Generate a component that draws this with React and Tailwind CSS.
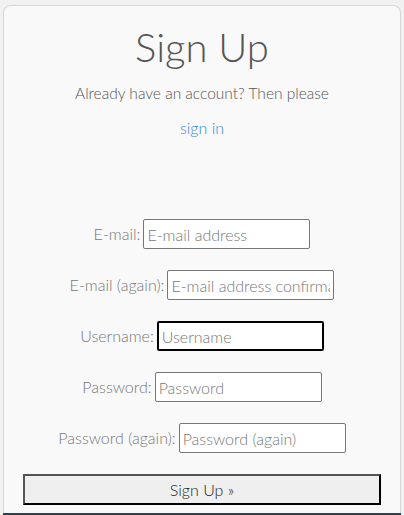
export default function App() {
  const rows = [
    { label: "E-mail:", placeholder: "E-mail address" },
    { label: "E-mail (again):", placeholder: "E-mail address confirmation" },
    { label: "Username:", placeholder: "Username", focused: true },
    { label: "Password:", placeholder: "Password" },
    { label: "Password (again):", placeholder: "Password (again)" },
  ];

  return (
    <div className="h-[515px] overflow-hidden bg-[#f1f1f1] pt-[5px] px-[3px] font-['Lato_Light','Lato','Liberation_Sans',sans-serif] flex flex-col">
      <div className="flex-1 rounded-t-lg border border-b-0 border-[#d6d6d6] bg-[#f9f9f9] flex flex-col items-center text-[#555] font-light">
        <h1 className="mt-[17px] text-[40px] leading-[48px] font-light text-[#555]">Sign Up</h1>
        <p className="mt-[13px] text-[15.5px] leading-[19px]">Already have an account? Then please</p>
        <a href="#" className="mt-[15px] text-[16px] leading-[19px] text-[#2f86f0]">sign in</a>

        <form className="mt-[82px] w-full flex flex-col gap-[21px]">
          {rows.map((r) => (
            <div key={r.label} className="flex items-center justify-center gap-[3px]">
              <label className="text-[16px] text-[#777]">{r.label}</label>
              <input
                type="text"
                placeholder={r.placeholder}
                className={`w-[167px] h-[30px] bg-white px-[3px] text-[16px] placeholder:text-[#777] outline-none rounded-[2px] ${
                  r.focused ? "border-2 border-black" : "border border-[#767676]"
                }`}
              />
            </div>
          ))}
          <div className="px-[19px]">
            <button
              type="button"
              className="w-full h-[31px] bg-[#efefef] border-2 border-t-[#555] border-l-[#555] border-b-black border-r-black text-[16px] text-[#222] font-light"
            >
              Sign Up »
            </button>
          </div>
        </form>
      </div>
      <div className="h-[2px] bg-[#2c3e50]" />
    </div>
  );
}
